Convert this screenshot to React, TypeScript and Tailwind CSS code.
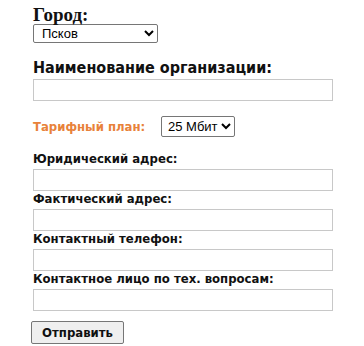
const inputCls = "block w-[300px] h-[22px] border border-[#c8c8c8] bg-white";

const Field = ({ label }: { label: string }) => (
  <div>
    <div className="text-[13px] font-bold leading-[15px] text-[#111]">{label}</div>
    <input type="text" className={`${inputCls} mt-[3px]`} />
  </div>
);

export default function App() {
  return (
    <div className="bg-white min-h-[346px] pl-[33px] pt-[6px] font-['DejaVu_Sans_Condensed','DejaVu_Sans',Verdana,sans-serif]">
      <div className="font-['Liberation_Serif',serif] text-[19px] font-bold leading-[18px] text-[#111]">Город:</div>
      <select className="block w-[125px] h-[19px] border border-[#767676] rounded-[2px] text-[13px] font-['Liberation_Sans',Arial,sans-serif] pl-[4px]">
        <option>Псков</option>
      </select>

      <div className="mt-[16px] text-[16px] font-bold leading-[18px] text-[#111]">Наименование организации:</div>
      <input type="text" className={`${inputCls} mt-[2px]`} />

      <div className="mt-[15px] flex items-center">
        <span className="text-[13px] font-bold text-[#e8823a] w-[128px]">Тарифный план:</span>
        <select className="h-[21px] w-[74px] border border-[#767676] rounded-[2px] text-[13px] font-['Liberation_Sans',Arial,sans-serif] pl-[2px]">
          <option>25 Мбит</option>
        </select>
      </div>

      <div className="mt-[14px]">
        <div className="text-[13px] font-bold leading-[15px] text-[#111]">Юридический адрес:</div>
        <input type="text" className={`${inputCls} mt-[3px]`} />
      </div>
      <Field label="Фактический адрес:" />
      <Field label="Контактный телефон:" />
      <Field label="Контактное лицо по тех. вопросам:" />

      <button className="mt-[10px] ml-[-2px] h-[23px] w-[93px] border border-[#767676] rounded-[2px] bg-[#efefef] text-[13px] font-bold text-[#111]">
        Отправить
      </button>
    </div>
  );
}
